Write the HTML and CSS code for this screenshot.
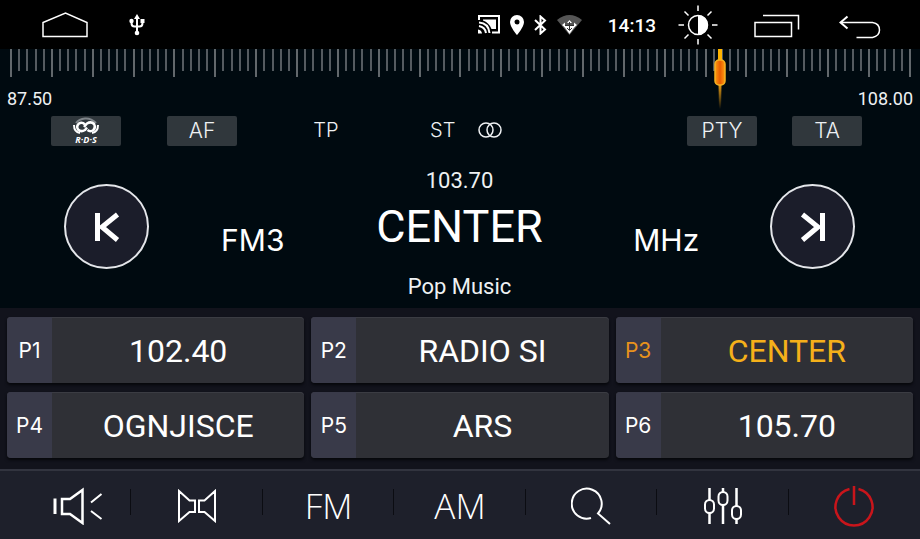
FILE: index.html
```html
<!DOCTYPE html>
<html lang="en">
<head>
<meta charset="utf-8">
<title>Radio</title>
<link rel="stylesheet" href="styles.css">
</head>
<body>
<header class="status">
  <button class="icon-btn" aria-label="Home"><svg width="46" height="26" viewBox="0 0 46 26"><path d="M1 24.500V10.500L23.500 1 45 10.500V24.500Z" class="line"/></svg></button>
  <svg class="usb" width="16" height="22" viewBox="0 0 16 22"><path d="M8 4V18M2.500 7V9Q2.500 12.500 5.500 12.500H10.500Q13.500 12.500 13.500 9V7" class="line thick"/><path d="M8 0 11 5H5Z" class="fill"/><circle cx="8" cy="19" r="2.300" class="fill"/><circle cx="2.500" cy="7" r="2.200" class="fill"/><path d="M11.500 5h4v4h-4z" class="fill"/></svg>
  <div class="signals">
    <svg width="22" height="19" viewBox="0 0 22 19"><path d="M1 5V1H21V17.500H14" class="line thick"/><path d="M5 4.500H18V14H13.500Q11 7.500 5 5.500Z" class="fill"/><path d="M1 7.500Q10.500 8 11.500 18M1 11Q7 12 8 18" class="line thick"/><path d="M0 14.500Q3.500 15 4 18.500H0Z" class="fill"/></svg>
    <svg width="14" height="20" viewBox="0 0 14 20"><path fill-rule="evenodd" d="M7 0a7 7 0 0 0-7 7c0 5 7 13 7 13s7-8 7-13a7 7 0 0 0-7-7zm0 4.500a2.500 2.500 0 1 1 0 5 2.500 2.500 0 0 1 0-5z" class="fill"/></svg>
    <svg width="13" height="20" viewBox="0 0 13 20"><path d="M1 5 11 14.500 6.500 18.500V1.500L11 5.500 1 15" class="line thick"/></svg>
    <svg width="26" height="20" viewBox="0 0 26 20"><path d="M0 5Q12.500-5 25 5L12.500 20Z" fill="#555"/><path d="M6 10H19L12.500 19Z" class="fill"/><path d="M12.500 5 15 8H10ZM5 10 8 7.500V12.500ZM20 10 17 7.500V12.500Z" class="fill"/><path d="M8 10.500H17M12.500 7V15M10 13 12.500 15.500 15 13" stroke="#333" fill="none"/></svg>
  </div>
  <time class="clock">14:13</time>
  <button class="icon-btn bright" aria-label="Brightness"><svg width="40" height="40" viewBox="0 0 40 40"><path d="M20 0.500V6M20 34V39.500M0.500 20H6M34 20H39.500M6.500 6.500 10.500 10.500M29.500 29.500 33.500 33.500M6.500 33.500 10.500 29.500M29.500 10.500 33.500 6.500" class="line"/><circle cx="20" cy="20" r="9.500" class="line"/><path d="M20 10a10 10 0 0 1 0 20z" class="fill"/></svg></button>
  <button class="icon-btn recent" aria-label="Recent apps"><svg width="46" height="24" viewBox="0 0 46 24"><path d="M1 8.500H37.500V22.500H1ZM9 1.500H44.500V15.500" class="line"/></svg></button>
  <button class="icon-btn back" aria-label="Back"><svg width="42" height="24" viewBox="0 0 42 24"><path d="M8.500 1.500 1.500 7.500 8.500 13.500" class="line thick"/><path d="M1.500 7.500H33.500Q40.500 8.500 40.500 15 40.500 21 33.500 22.500H17.500" class="line"/></svg></button>
</header>

<main>
  <section class="tuner">
    <div class="scale" id="scale"></div>
    <svg class="needle" width="14" height="60" viewBox="0 0 14 60"><defs><linearGradient id="tail" x2="0" y2="1"><stop stop-color="#f0a010"/><stop offset="1" stop-color="#f0a010" stop-opacity="0"/></linearGradient><linearGradient id="grip"><stop stop-color="#ff9a10"/><stop offset=".5" stop-color="#e85c00"/><stop offset="1" stop-color="#ff9a10"/></linearGradient></defs><path d="M5 0h4v12H5z" fill="#ffb400"/><path d="M5.500 35h3L8 60h-2z" fill="url(#tail)"/><rect x="2" y="11" width="10" height="25" rx="4" fill="url(#grip)" stroke="#f5b223" stroke-width="1.500"/></svg>
    <div class="range"><span>87.50</span><span>108.00</span></div>
    <div class="tags">
      <button class="tag" aria-label="RDS"><svg width="30" height="28" viewBox="0 0 30 28"><path d="M5 6Q8 2 14 1.500T25 6" stroke="#80868b" stroke-width="2" fill="none"/><path d="M14 7.500Q11 4.500 8 6.500 5 9 7 12.500 10 15.500 14 13L16 10.500" stroke="#fff" stroke-width="2.500" fill="none"/><path d="M13 10 16 6.500Q20 4 23 7 25 10.500 22 13.500 19 15 16.500 13" stroke="#fff" stroke-width="2.500" fill="none"/><path d="M3 8Q3 15 9 16M27 8Q27 15 21 16" stroke="#fff" stroke-width="2" fill="none"/><text x="15" y="26" class="rds">R·D·S</text></svg></button>
      <button class="tag">AF</button>
      <span class="flag">TP</span>
      <span class="stereo">ST <svg width="24" height="16" viewBox="0 0 24 16"><circle cx="8" cy="8" r="7" class="ring"/><circle cx="16" cy="8" r="7" class="ring"/></svg></span>
      <div class="tag-pair"><button class="tag">PTY</button><button class="tag">TA</button></div>
    </div>
    <div class="station">
      <button class="seek" aria-label="Previous station"><svg width="28" height="30" viewBox="0 0 28 30"><path d="M4.500 1V29M24.500 2.500 9 15 24.500 28" class="arrow"/></svg></button>
      <span class="unit">FM3</span>
      <div class="now">
        <span class="small">103.70</span>
        <h1 class="name">CENTER</h1>
        <span class="small">Pop Music</span>
      </div>
      <span class="unit">MHz</span>
      <button class="seek" aria-label="Next station"><svg width="28" height="30" viewBox="0 0 28 30"><path d="M23.500 1V29M3.500 2.500 19 15 3.500 28" class="arrow"/></svg></button>
    </div>
  </section>

  <section class="presets">
    <button class="preset"><span class="slot">P1</span><span class="label">102.40</span></button>
    <button class="preset"><span class="slot">P2</span><span class="label">RADIO SI</span></button>
    <button class="preset active"><span class="slot">P3</span><span class="label">CENTER</span></button>
    <button class="preset"><span class="slot">P4</span><span class="label">OGNJISCE</span></button>
    <button class="preset"><span class="slot">P5</span><span class="label">ARS</span></button>
    <button class="preset"><span class="slot">P6</span><span class="label">105.70</span></button>
  </section>
</main>

<nav class="toolbar">
  <button class="tool" aria-label="Volume"><svg width="76" height="38" viewBox="0 0 76 38"><path d="M27 11.500V27" stroke="#fff" stroke-width="3"/><path d="M34 12H42L54.500 3V36L42 27H34Z" class="line bold"/><path d="M63 15.500 73.500 7M63 24 73.500 32" class="line thick"/></svg></button>
  <button class="tool" aria-label="Balance"><svg width="40" height="34" viewBox="0 0 40 34"><path d="M2 2V32L12.500 23H18V11.500H12.500ZM38 2V32L27.500 23H22V11.500H27.500Z" class="line thick"/></svg></button>
  <button class="tool">FM</button>
  <button class="tool">AM</button>
  <button class="tool" aria-label="Search"><svg width="40" height="40" viewBox="0 0 40 40"><path d="M20 32A15 15 0 1 1 27 27.500L39 38" class="line thick"/></svg></button>
  <button class="tool" aria-label="Equalizer"><svg width="40" height="38" viewBox="0 0 40 38"><path d="M6.500 1V13M6.500 26V37M20 1V5M20 18V37M33.500 1V19M33.500 32V37" class="line bold"/><rect x="2" y="13" width="9" height="13" rx="4.500" class="line thick"/><rect x="15.500" y="5" width="9" height="13" rx="4.500" class="line thick"/><rect x="29" y="19" width="9" height="13" rx="4.500" class="line thick"/></svg></button>
  <button class="tool" aria-label="Power"><svg width="40" height="42" viewBox="0 0 40 42"><path d="M15.500 4A18.500 18.500 0 1 0 24.500 4M20 1V20" stroke="#c9151b" stroke-width="2.500" fill="none"/></svg></button>
</nav>
<script src="scale.js"></script>
</body>
</html>
```
FILE: scale.js
```js
// Frequency scale: 110 steps, with a long mark on every fifth one.
const scale = document.getElementById('scale');
for (let i = 0; i <= 110; i++) {
  const tick = document.createElement('span');
  tick.className = i % 5 === 0 ? 'tick major' : 'tick';
  scale.append(tick);
}
```
FILE: styles.css
```css
* { box-sizing: border-box; }

body {
  margin: 0;
  min-height: 100vh;
  display: flex;
  flex-direction: column;
  background: #12131c;
  color: #fff;
  font-family: Roboto, sans-serif;
}

button {
  border: 0;
  padding: 0;
  background: none;
  color: inherit;
  font: inherit;
}

svg { display: block; }
.line { fill: none; stroke: #fff; stroke-width: 1.5; }
.line.thick { stroke-width: 2; }
.line.bold { stroke-width: 2.5; }
.fill { fill: #fff; }

.status {
  display: flex;
  align-items: center;
  height: 49px;
  padding: 0 39px 0 42px;
  background: #000;
}
.usb { margin-left: 41px; }
.signals {
  display: flex;
  align-items: center;
  gap: 10px;
  margin-left: auto;
}
.clock {
  margin: 2px 22px 0 25px;
  font-size: 19px;
  font-weight: 500;
}
.recent { margin: 3px 39px 0 36px; }
.back { margin-top: 4px; }

.tuner {
  position: relative;
  padding-bottom: 6px;
  background: #000a10;
}
.scale {
  display: flex;
  justify-content: space-between;
  height: 28px;
  padding: 0 8px 0 10px;
}
.tick {
  width: 2px;
  height: 22px;
  background: #555b60;
}
.tick.major { height: 28px; background: #62686c; }
.needle {
  position: absolute;
  top: 0;
  left: 78.26%;
  margin-left: -7px;
}
.range {
  display: flex;
  justify-content: space-between;
  padding: 12px 7px 0;
  font-size: 18px;
  line-height: 20px;
  color: #eef1f3;
}

.tags {
  display: grid;
  grid-template-columns: 70px 70px 86px 1fr auto;
  column-gap: 46px;
  align-items: center;
  margin-top: 7px;
  padding: 0 58px 0 51px;
  color: #eef1f3;
  font: 300 21px/26px Inter, sans-serif;
}
.tag {
  display: flex;
  align-items: center;
  justify-content: center;
  width: 70px;
  height: 30px;
  border-radius: 2px;
  background: #30373c;
}
.rds {
  fill: #fff;
  font: italic 700 9px "Open Sans", sans-serif;
  text-anchor: middle;
}
.flag,
.stereo {
  padding-bottom: 2px;
  font-size: 20px;
}
.flag { text-align: center; }
.stereo {
  display: flex;
  align-items: center;
  gap: 23px;
  padding-left: 15px;
}
.ring { fill: none; stroke: #eef1f3; stroke-width: 1.5; }
.tag-pair { display: flex; gap: 35px; }

.station {
  display: grid;
  grid-template-columns: 85px 1fr 206px 1fr 85px;
  align-items: start;
  padding: 20px 65px 0 64px;
  text-align: center;
}
.seek {
  display: flex;
  align-items: center;
  justify-content: center;
  width: 85px;
  height: 85px;
  margin-top: 18px;
  border: 2px solid #e4e6ea;
  border-radius: 50%;
  background: #1b1d2a;
}
.arrow { fill: none; stroke: #fff; stroke-width: 5; }
.unit {
  margin-top: 56px;
  font: 400 30px/36px Inter, sans-serif;
}
.now {
  display: flex;
  flex-direction: column;
  align-items: center;
}
.small { font-size: 22px; line-height: 30px; color: #eef1f3; }
.name {
  margin: 3px 0 17px;
  font-size: 45px;
  font-weight: 400;
  line-height: 56px;
}

.presets {
  display: grid;
  grid-template-columns: repeat(3, 1fr);
  gap: 9px 7px;
  padding: 9px 7px 11px;
}
.preset {
  display: flex;
  height: 66px;
  border-radius: 4px;
  overflow: hidden;
  background: #2f3036;
  box-shadow: 0 2px 3px #06070b, inset 0 1px #3b3c43;
}
.slot {
  width: 45px;
  background: #393a49;
  font: 400 21px/67px Inter, sans-serif;
  text-align: center;
}
.label {
  flex: 1;
  font-size: 32px;
  line-height: 69px;
}
.active .slot { color: #e8921c; }
.active .label { color: #f5b01a; }

.toolbar {
  display: grid;
  grid-template-columns: repeat(7, 1fr);
  flex: 1;
  min-height: 70px;
  border-top: 2px solid #32343f;
  background: #1e202b;
}
.tool {
  display: flex;
  align-items: center;
  justify-content: center;
  padding-top: 1px;
  font: 300 35px/40px "Open Sans", sans-serif;
  background: linear-gradient(#0b0c12, #0b0c12) right 18px / 1px 26px no-repeat;
}
.tool:last-child { background: none; }
```
